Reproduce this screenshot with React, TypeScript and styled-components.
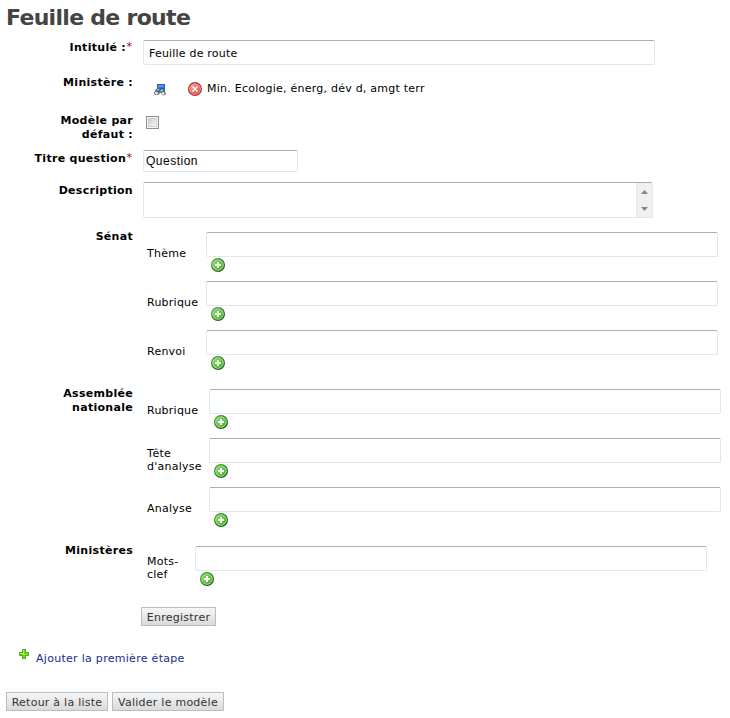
import React from "react";
import styled, { createGlobalStyle } from "styled-components";

const GlobalStyle = createGlobalStyle`
  *, *::before, *::after { box-sizing: border-box; }
  body {
    margin: 0;
    background: #fff;
    color: #000;
    font-family: Verdana, "DejaVu Sans", sans-serif;
    font-size: 11px;
    line-height: 14px;
    letter-spacing: 0.24px;
  }
  svg { display: block; flex: none; }
`;

const Page = styled.main`
  width: 730px;
  height: 718px;
  overflow: hidden;
`;

const Title = styled.h1`
  margin: 0;
  height: 40px;
  padding: 4px 0 0 6px;
  font-size: 22px;
  line-height: 28px;
  letter-spacing: -0.7px;
  color: #444;
`;

const Row = styled.div<{ $height: number }>`
  display: grid;
  grid-template-columns: 133px 1fr;
  column-gap: 10px;
  align-items: start;
  height: ${(p) => p.$height}px;
`;

const Label = styled.div`
  padding-top: 1px;
  text-align: right;
  font-weight: bold;
  white-space: pre-line;
  letter-spacing: 0.29px;
`;

const Star = styled.span`
  display: inline-block;
  width: 7px;
  color: #b00000;
  font-weight: normal;
  text-align: center;
  vertical-align: 1px;
  line-height: 10px;
`;

const inputFrame = `
  display: block;
  margin: 0;
  border: 1px solid #e2e6ee;
  border-top-color: #abadb3;
  border-radius: 2px;
  background: #fff;
  color: #000;
  outline: none;
`;

const Input = styled.input`
  ${inputFrame}
  width: 512px;
  height: 25px;
  padding: 1px 5px 0;
  font: 11px Verdana, "DejaVu Sans", sans-serif;
  letter-spacing: 0.2px;
`;

const ShortInput = styled.input`
  ${inputFrame}
  width: 155px;
  height: 22px;
  margin-top: -1px;
  padding: 0 2px;
  font: 12px "Liberation Sans", Arial, sans-serif;
  letter-spacing: 0.5px;
`;

const TextArea = styled.div`
  ${inputFrame}
  display: flex;
  justify-content: flex-end;
  width: 510px;
  height: 36px;
  margin-top: -1px;
`;

const ScrollBar = styled.div`
  display: flex;
  flex-direction: column;
  justify-content: space-between;
  align-items: center;
  width: 16px;
  padding: 7px 0 6px;
  background: #f0f0f0;
  border-left: 1px solid #e6e6e6;
`;

const Ministry = styled.div`
  display: flex;
  align-items: center;
  height: 14px;
  margin-top: 7px;
  padding-left: 11px;
`;

const MinistryName = styled.span`
  margin-left: 5px;
`;

const Lookup = styled.span`
  width: 34px;
  padding-top: 1px;
`;

const Checkbox = styled.span`
  display: block;
  width: 13px;
  height: 13px;
  margin: 3px 0 0 3px;
  padding: 2px;
  border: 1px solid #8e8f8f;
  background: linear-gradient(135deg, #c6cbd3, #f6f6f6) content-box;
  box-shadow: inset 0 0 0 1px #f4f4f4, inset 0 0 0 2px #cdd0d5;
`;

const Fields = styled.div<{ $labelWidth: number }>`
  display: grid;
  grid-template-columns: ${(p) => p.$labelWidth}px 512px;
  grid-auto-rows: 49px;
  padding: 3px 0 0 4px;
`;

const FieldLabel = styled.div`
  height: 43px;
  display: flex;
  align-items: center;
  line-height: 13px;
  white-space: pre-line;
`;

const FieldBody = styled.div`
  svg { margin: 1px 0 0 5px; }
`;

const Button = styled.button`
  height: 19px;
  padding: 1px 0 0;
  border: 1px solid #b8bec8;
  background: linear-gradient(#f6f6f6, #dadada);
  color: #333;
  font: 11px Verdana, "DejaVu Sans", sans-serif;
  letter-spacing: 0.25px;
  white-space: nowrap;
`;

const SaveButton = styled(Button)`
  display: block;
  width: 75px;
  margin-left: 141px;
`;

const ListButton = styled(Button)`
  width: 102px;
`;

const ValidateButton = styled(Button)`
  width: 112px;
`;

const AddStep = styled.a`
  display: flex;
  gap: 7px;
  height: 17px;
  margin: 23px 0 0 19px;
  color: #1b2a8e;
  letter-spacing: 0.29px;
`;

const AddStepText = styled.span`
  padding-top: 3px;
`;

const Actions = styled.div`
  display: flex;
  gap: 4px;
  margin: 26px 0 0 6px;
`;

const AddIcon = () => (
  <svg width="14" height="14" viewBox="0 0 14 14">
    <defs>
      <linearGradient id="add" x1="0" y1="0" x2="1" y2="1">
        <stop offset="0" stopColor="#8fdc70" />
        <stop offset="1" stopColor="#3fb426" />
      </linearGradient>
      <linearGradient id="addRim" x1="0" y1="0" x2="1" y2="1">
        <stop offset="0" stopColor="#4aa53a" />
        <stop offset="1" stopColor="#1c4a12" />
      </linearGradient>
    </defs>
    <circle cx="7" cy="7" r="6.4" fill="#b5eaa0" stroke="url(#addRim)" strokeWidth="1.2" />
    <circle cx="7" cy="7" r="5" fill="url(#add)" />
    <path d="M7 4v6M4 7h6" stroke="#fff" strokeWidth="2" />
  </svg>
);

const RemoveIcon = () => (
  <svg width="14" height="14" viewBox="0 0 14 14">
    <defs>
      <linearGradient id="remove" x1="0" y1="0" x2="1" y2="1">
        <stop offset="0" stopColor="#f3a09a" />
        <stop offset="1" stopColor="#e0524c" />
      </linearGradient>
    </defs>
    <circle cx="7" cy="7" r="6.4" fill="#f6b5af" stroke="#b3302d" strokeWidth="1.2" />
    <circle cx="7" cy="7" r="5.2" fill="url(#remove)" />
    <path d="M4.500 4.500l5 5M9.500 4.500l-5 5" stroke="#fff" strokeWidth="1.500" />
  </svg>
);

const LookupIcon = () => (
  <svg width="12" height="12" viewBox="0 0 12 12">
    <path d="M3 0h8v7H3z" fill="#1f5fc4" />
    <path d="M4 1h6v2.500H4z" fill="#4f94ea" />
    <path d="M2 5l2.500-1 2 1.500L9 4.500l1.500 2L12 10l-2 1.500L8 11 6.500 8.500 4 11H1L0 9z" fill="#5f6b76" />
    <circle cx="2.500" cy="9.200" r="1.400" fill="#e4ebf0" />
    <circle cx="9" cy="9.500" r="1.400" fill="#e4ebf0" />
    <path d="M3 6l2-.7M6.500 6.700l2.500-.5" stroke="#dde3e8" />
  </svg>
);

const PlusIcon = () => (
  <svg width="10" height="10" viewBox="0 0 10 10">
    <path d="M3.500.5h3v3h3v3h-3v3h-3v-3h-3v-3h3z" fill="#7fdc28" stroke="#45a613" />
    <path d="M4.500 1v3.500H1" fill="none" stroke="#c4ec48" />
  </svg>
);

const Arrow = ({ down = false }: { down?: boolean }) => (
  <svg width="7" height="4" viewBox="0 0 7 4">
    <path d={down ? "M0 0h7L3.500 4z" : "M0 4h7L3.500 0z"} fill="#858585" />
  </svg>
);

const FieldGroup = ({ labelWidth, names }: { labelWidth: number; names: string[] }) => (
  <Fields $labelWidth={labelWidth}>
    {names.map((name) => (
      <React.Fragment key={name}>
        <FieldLabel>{name}</FieldLabel>
        <FieldBody>
          <Input aria-label={name} />
          <AddIcon />
        </FieldBody>
      </React.Fragment>
    ))}
  </Fields>
);

export default function App() {
  return (
    <Page>
      <GlobalStyle />
      <Title>Feuille de route</Title>
      <Row $height={35}>
        <Label>Intitulé :<Star>*</Star></Label>
        <Input defaultValue="Feuille de route" />
      </Row>
      <Row $height={38}>
        <Label>Ministère :</Label>
        <Ministry>
          <Lookup><LookupIcon /></Lookup>
          <RemoveIcon />
          <MinistryName>Min. Ecologie, énerg, dév d, amgt terr</MinistryName>
        </Ministry>
      </Row>
      <Row $height={38}>
        <Label>{"Modèle par\ndéfaut :"}</Label>
        <Checkbox role="checkbox" aria-checked="false" />
      </Row>
      <Row $height={32}>
        <Label>Titre question<Star>*</Star></Label>
        <ShortInput defaultValue="Question" />
      </Row>
      <Row $height={46}>
        <Label>Description</Label>
        <TextArea>
          <ScrollBar>
            <Arrow />
            <Arrow down />
          </ScrollBar>
        </TextArea>
      </Row>
      <Row $height={157}>
        <Label>Sénat</Label>
        <FieldGroup labelWidth={59} names={["Thème", "Rubrique", "Renvoi"]} />
      </Row>
      <Row $height={157}>
        <Label>{"Assemblée\nnationale"}</Label>
        <FieldGroup labelWidth={62} names={["Rubrique", "Tête\nd'analyse", "Analyse"]} />
      </Row>
      <Row $height={64}>
        <Label>Ministères</Label>
        <FieldGroup labelWidth={48} names={["Mots-\nclef"]} />
      </Row>
      <SaveButton>Enregistrer</SaveButton>
      <AddStep>
        <PlusIcon />
        <AddStepText>Ajouter la première étape</AddStepText>
      </AddStep>
      <Actions>
        <ListButton>Retour à la liste</ListButton>
        <ValidateButton>Valider le modèle</ValidateButton>
      </Actions>
    </Page>
  );
}
